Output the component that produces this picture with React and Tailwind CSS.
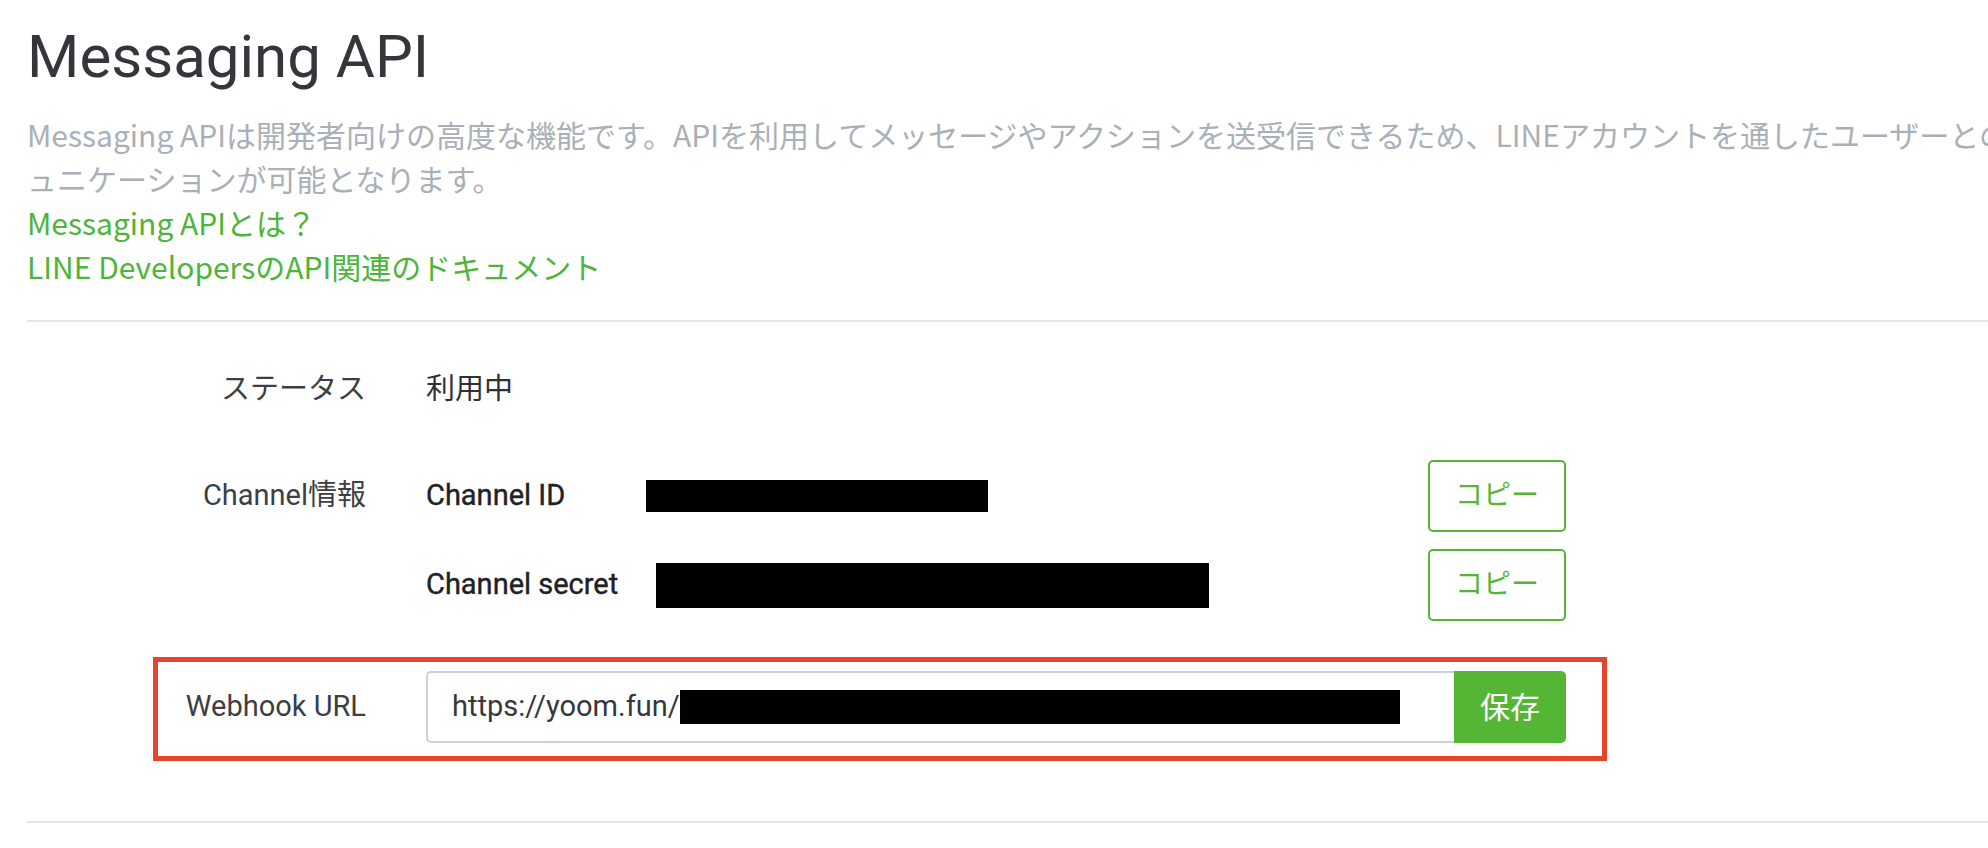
import React from "react";

const sans = "font-['Roboto','Noto_Sans_CJK_JP',sans-serif]";
const narrow = "font-['Liberation_Sans_Narrow','Noto_Sans_CJK_JP',sans-serif]";

function Redact({ w, h }) {
  return <span className="inline-block bg-black shrink-0" style={{ width: w, height: h }} />;
}

function CopyButton() {
  return (
    <button className={`ml-auto shrink-0 w-[138px] h-[72px] border-2 border-[#55b636] rounded-[5px] bg-white text-[#55b636] text-[28px] flex items-center justify-center ${sans}`}>
      コピー
    </button>
  );
}

export default function App() {
  return (
    <div className="w-full h-[848px] overflow-hidden bg-white">
      <div className="pl-[27px] pt-[24px]">
        <h1 className={`text-[60px] leading-[66px] text-[#33363b] font-normal whitespace-nowrap ${sans}`}>
          Messaging API
        </h1>
        <div className={`mt-[22px] text-[30px] leading-[44px] whitespace-nowrap ${narrow}`}>
          <p className="text-[#aab0b7]">
            Messaging APIは開発者向けの高度な機能です。APIを利用してメッセージやアクションを送受信できるため、LINEアカウントを通したユーザーとのコミ
          </p>
          <p className="text-[#aab0b7]">ュニケーションが可能となります。</p>
          <p className="text-[#4db53a]">Messaging APIとは？</p>
          <p className="text-[#4db53a]">LINE DevelopersのAPI関連のドキュメント</p>
        </div>

        <div className="mt-[32px] h-[2px] bg-[#e6e6e6] w-full" />

        <div className={`ml-[126px] w-[1454px] flex flex-col text-[29px] ${sans}`}>
          {/* Status */}
          <div className="mt-[27px] h-[82px] flex items-center border-[5px] border-transparent pr-[36px]">
            <div className="w-[208px] shrink-0 text-right text-[#3c3f44]">ステータス</div>
            <div className="ml-[60px] text-[#2d3035]">利用中</div>
          </div>

          {/* Channel ID */}
          <div className="mt-[24px] h-[82px] flex items-center border-[5px] border-transparent pr-[36px]">
            <div className="w-[208px] shrink-0 text-right text-[#3c3f44]">Channel情報</div>
            <div className="ml-[60px] flex-1 flex items-center">
              <span className="w-[220px] shrink-0 font-normal text-[#1e2125] [-webkit-text-stroke:0.4px_#1e2125]">Channel ID</span>
              <Redact w={342} h={32} />
              <CopyButton />
            </div>
          </div>

          {/* Channel secret */}
          <div className="mt-[7px] h-[82px] flex items-center border-[5px] border-transparent pr-[36px]">
            <div className="w-[208px] shrink-0" />
            <div className="ml-[60px] flex-1 flex items-center">
              <span className="w-[230px] shrink-0 font-normal text-[#1e2125] [-webkit-text-stroke:0.4px_#1e2125]">Channel secret</span>
              <Redact w={553} h={45} />
              <CopyButton />
            </div>
          </div>

          {/* Webhook URL */}
          <div className="mt-[31px] flex items-center border-[5px] border-[#e8432b] pr-[36px] pt-[9px] pb-[13px]">
            <div className="w-[208px] shrink-0 text-right text-[#3c3f44]">Webhook URL</div>
            <div className="ml-[60px] flex-1 flex items-stretch h-[72px]">
              <div className="flex-1 flex items-center border-2 border-r-0 border-[#ced2d6] rounded-l-[5px] pl-[24px] overflow-hidden whitespace-nowrap">
                <span className="text-[#35383d]">https://yoom.fun/</span>
                <Redact w={720} h={34} />
              </div>
              <button className="w-[112px] shrink-0 bg-[#55b636] rounded-r-[5px] text-white text-[30px] flex items-center justify-center">
                保存
              </button>
            </div>
          </div>
        </div>

        <div className="mt-[60px] h-[2px] bg-[#e6e6e6] w-full" />
      </div>
    </div>
  );
}
